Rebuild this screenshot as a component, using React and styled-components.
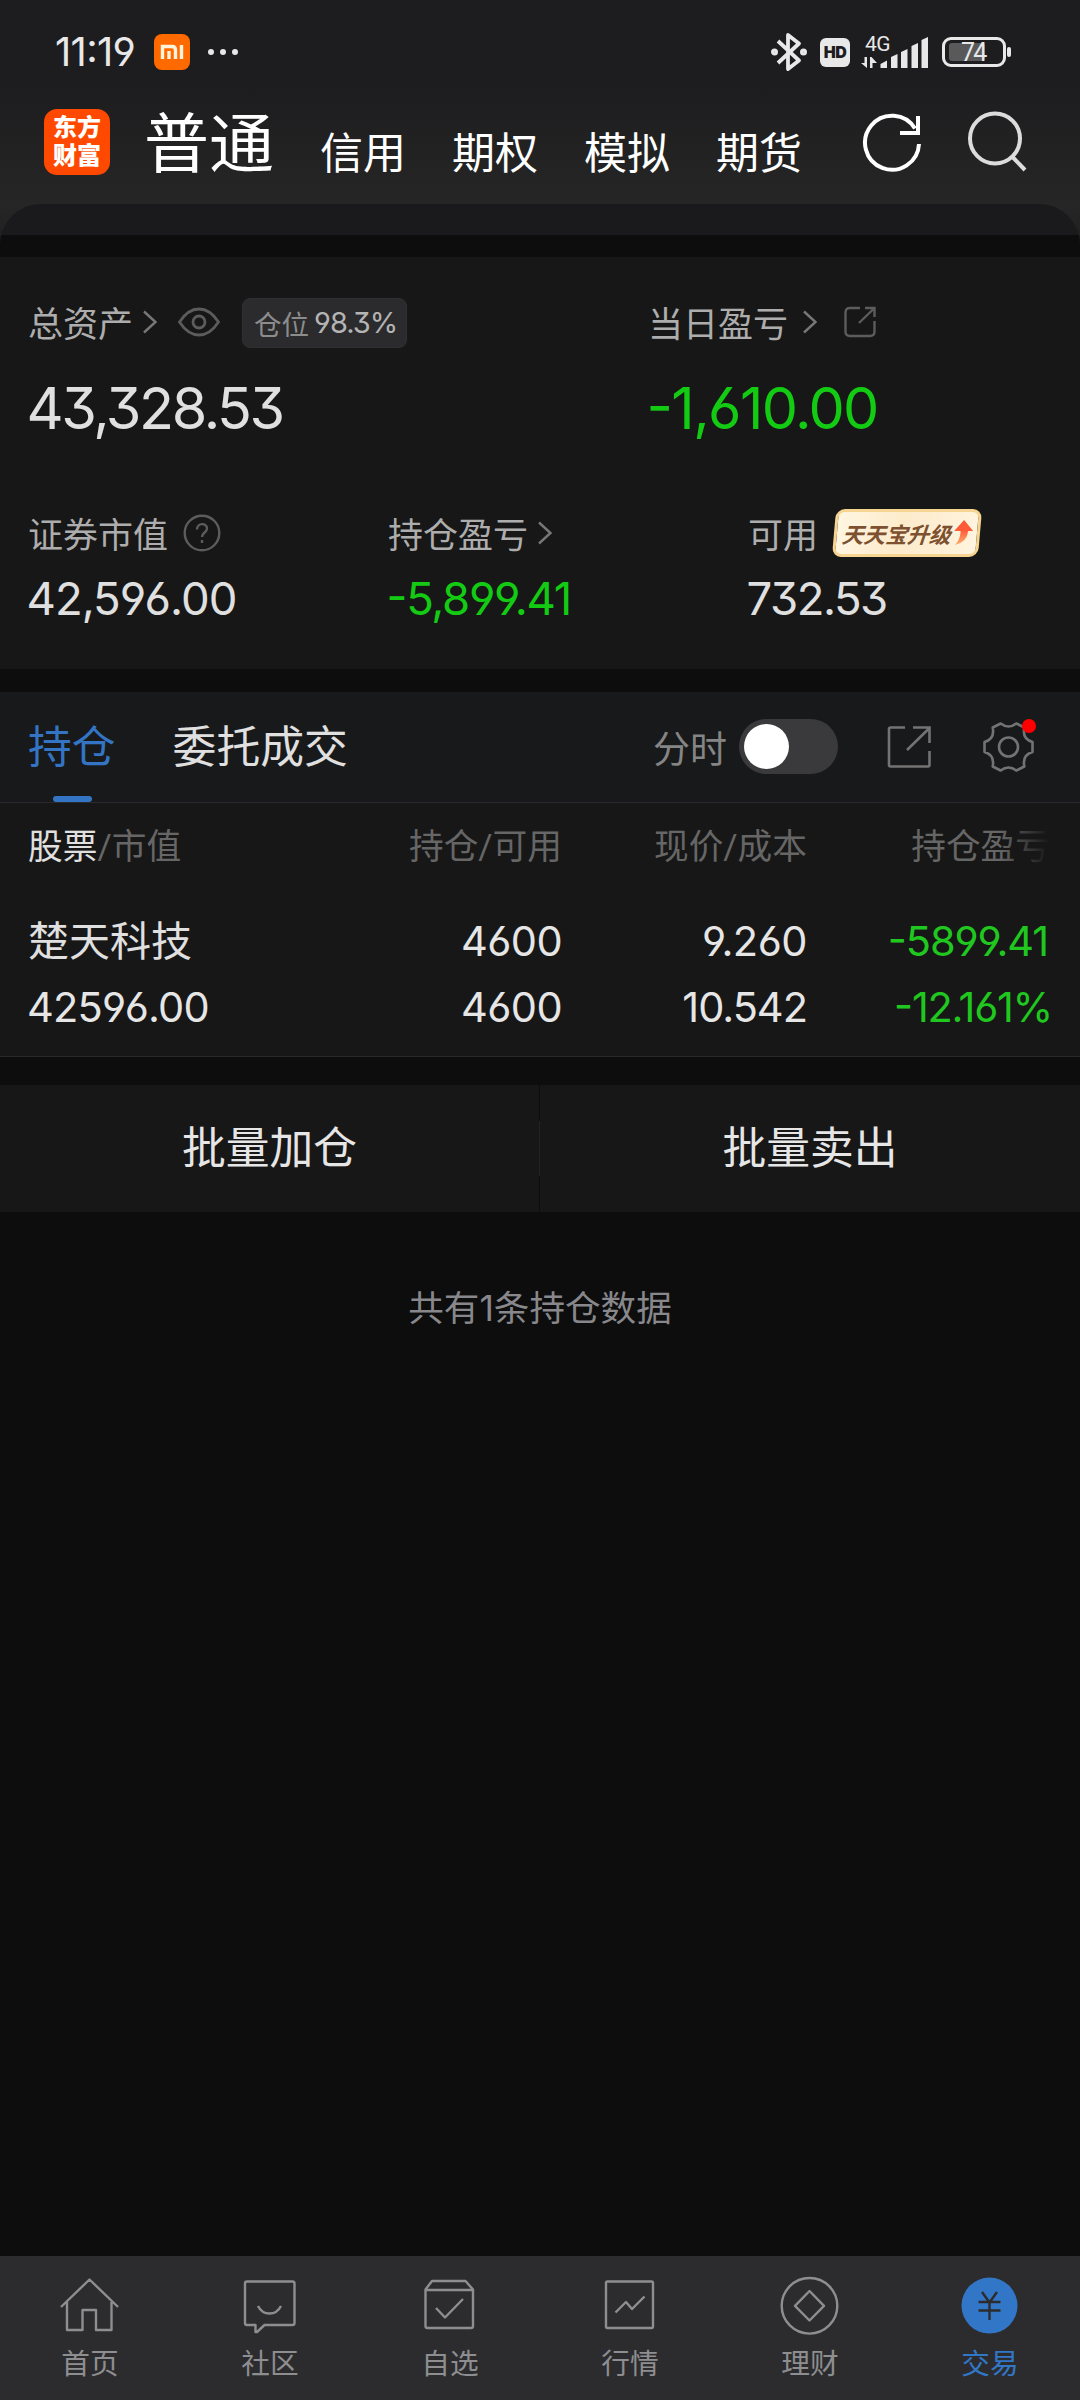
import React, {useState} from "react";
import styled, {createGlobalStyle} from "styled-components";

const GlobalStyles = createGlobalStyle`
    * {
        box-sizing: border-box;
    }

    body {
        margin: 0;
        background: #0d0d0d;
        color: #e0e0e0;
        font-family: Roboto, "Noto Sans CJK SC", sans-serif;
    }

    svg {
        display: block;
        flex: none;
    }
`

const Page = styled.div`
    width: 1080px;
    height: 2400px;
    display: flex;
    flex-direction: column;
    overflow: hidden;
    background: #0d0d0d;
    white-space: nowrap;
`

// figures use the flat 3, the straight 6 and 9 and the raised minus
const Figures = styled.div`
    font-family: Inter, "Noto Sans CJK SC", sans-serif;
    font-feature-settings: "cv03", "cv04", "cv09", "case";
`

const Top = styled.div`
    background: linear-gradient(#1d1d1f 0px, #1d1d1f 85px, #262626 204px);
`

const StatusBar = styled.div`
    height: 104px;
    padding: 0 74px 0 55px;
    display: flex;
    align-items: center;
    color: #e8e8e8;
`

const Clock = styled(Figures)`
    width: 99px;
    font-size: 40px;
    line-height: 46px;
    letter-spacing: -0.7px;
`

const StatusDots = styled.div`
    display: flex;
    gap: 6px;
    margin-left: 18px;

    i {
        width: 6px;
        height: 6px;
        border-radius: 3px;
        background: #e8e8e8;
    }
`

const StatusRight = styled.div`
    margin-left: auto;
    display: flex;
    align-items: center;
`

const HdBadge = styled.div`
    width: 30px;
    height: 29px;
    margin: 0 11px 0 13px;
    border-radius: 6px;
    background: #e8e8e8;
    color: #1d1d1f;
    font: 900 16px/29px Inter, sans-serif;
    letter-spacing: -0.5px;
    text-align: center;
`

const Signal = styled.div`
    position: relative;
    width: 68px;
    height: 34px;
    margin-right: 13px;
`

const Network = styled.span`
    position: absolute;
    left: 4px;
    top: -2px;
    font-size: 21px;
    line-height: 22px;
    letter-spacing: -0.5px;
`

const Battery = styled.div`
    position: relative;
    width: 64px;
    height: 30px;
    padding: 3px 4px;
    border: 3px solid #e8e8e8;
    border-radius: 9px;

    &:after {
        content: '';
        position: absolute;
        right: -8px;
        top: 7px;
        width: 4px;
        height: 10px;
        border-radius: 2px;
        background: #e8e8e8;
    }
`

const BatteryLevel = styled.div`
    width: 36px;
    height: 18px;
    border-radius: 3px;
    background: #59595a;
`

const BatteryText = styled.span`
    position: absolute;
    left: 16px;
    top: 1px;
    font-size: 25px;
    line-height: 23px;
    letter-spacing: -1.8px;
`

const Header = styled.div`
    height: 100px;
    padding: 0 52px 0 44px;
    display: flex;
    align-items: flex-start;
    color: #fff;
`

const Logo = styled.div`
    width: 66px;
    height: 66px;
    margin-top: 5px;
    padding-top: 5px;
    border-radius: 13px;
    background: #ff4800;
    font: 900 24px/28px Roboto, "Noto Sans CJK SC", sans-serif;
    text-align: center;
`

const Account = styled.div`
    width: 132px;
    margin: ${props => props.active ? '3px 0 0 34px' : '22px 0 0 0'};
    font-size: ${props => props.active ? '65px' : '43px'};
    line-height: ${props => props.active ? '76px' : '56px'};
`

const Accounts = styled.div`
    display: flex;
    margin-left: 44px;
`

const HeaderIcons = styled.div`
    display: flex;
    gap: 43px;
    margin: 4px 0 0 auto;
`

const Sheet = styled.div`
    height: 53px;
    padding-top: 31px;
    border-radius: 41px 41px 0 0;
    overflow: hidden;
    background: #1a1a1c;

    &:after {
        content: '';
        display: block;
        height: 22px;
        background: #0d0d0d;
    }
`

const SheetBack = styled.div`
    background: linear-gradient(#262626, #1d1d1d);
`

const Assets = styled.div`
    height: 412px;
    padding: 37px 0 0 28px;
    background: #171717;
`

const AssetsTop = styled.div`
    display: grid;
    grid-template-columns: 620px 1fr;
    height: 211px;
`

const AssetsBottom = styled.div`
    display: grid;
    grid-template-columns: 360px 360px 1fr;
`

const Label = styled.div`
    height: ${props => props.tall ? '56px' : '54px'};
    padding-bottom: ${props => props.tall ? '2px' : '0'};
    display: flex;
    align-items: center;
    font-size: 35px;
    color: #adadad;

    > svg {
        margin-top: 2px;
    }
`

const Value = styled(Figures)`
    margin: ${props => props.big ? '27px' : '12px'} 0 0 -1.5px;
    font-size: ${props => props.big ? '57.5px' : '45.5px'};
    line-height: ${props => props.big ? '62px' : '56px'};
    letter-spacing: ${props => props.track};
    color: ${props => props.green ? '#14cb14' : '#e0e0e0'};
`

const Position = styled(Figures)`
    width: 165px;
    height: 50px;
    margin: 3px 0 0 22px;
    padding-left: 11px;
    display: flex;
    align-items: center;
    gap: 5px;
    border: 1px solid #2f2f31;
    border-radius: 8px;
    background: #2b2b2d;
    font-size: 27.5px;
    color: #8c8c8c;

    b {
        font-size: 29px;
        font-weight: 400;
        letter-spacing: -1px;
        color: #b4b4b4;
    }
`

const Promo = styled.div`
    width: 146px;
    height: 48px;
    margin: 1px 0 0 16px;
    padding-left: 5px;
    display: flex;
    align-items: center;
    gap: 3px;
    border: 3px solid #f6d491;
    border-radius: 9px;
    background: linear-gradient(100deg, #fff6e2, #fdebcb 45%, #fff4df);
    transform: skewX(-5deg);
    font-size: 21.8px;
    font-weight: 700;
    font-style: italic;
    color: #7d5030;
`

const Tabs = styled.div`
    height: 111px;
    margin-top: 23px;
    padding: 0 46px 0 28px;
    display: flex;
    align-items: center;
    border-bottom: 1px solid #2a2a2c;
    background: #18191b;
`

const Tab = styled.div`
    position: relative;
    height: 110px;
    margin-right: 57px;
    font-size: 43.8px;
    line-height: 112px;
    color: ${props => props.active ? '#3375c4' : '#e0e0e0'};

    ${props => props.active && `
        &:after {
            content: '';
            position: absolute;
            left: 25px;
            bottom: 0;
            width: 39px;
            height: 6px;
            border-radius: 3px;
            background: #3375c4;
        }
    `}
`

const TabTools = styled.div`
    margin: -1px 0 0 auto;
    display: flex;
    align-items: center;
    font-size: 37px;
    color: #858585;
`

const Switch = styled.button`
    width: 99px;
    height: 55px;
    margin: 0 49px 0 12px;
    padding: 0 5px;
    display: flex;
    align-items: center;
    justify-content: ${props => props.$on ? 'flex-end' : 'flex-start'};
    border: 0;
    border-radius: 28px;
    background: #3a3a3c;

    &:after {
        content: '';
        width: 45px;
        height: 45px;
        border-radius: 50%;
        background: #fff;
    }
`

const Settings = styled.div`
    position: relative;
    margin-left: 52px;

    &:after {
        content: '';
        position: absolute;
        right: -2px;
        top: -3px;
        width: 14px;
        height: 14px;
        border-radius: 7px;
        background: #f00;
    }
`

const Table = styled.div`
    position: relative;
    height: 254px;
    border-bottom: 1px solid #29292b;
    background: #171717;
`

const Row = styled.div`
    display: grid;
    grid-template-columns: 289px 245px 245px 245px;
    padding-left: 28px;
    text-align: right;

    > :first-child {
        text-align: left;
    }
`

const HeadRow = styled(Row)`
    padding-top: 19px;
    font-size: 34.7px;
    line-height: 50px;
    color: #666;

    > :last-child {
        margin-right: 2px;
    }

    em {
        font-style: normal;
        color: #e0e0e0;
    }
`

const FirstRow = styled(Row)`
    padding-top: 36px;
    font-size: 41.5px;
    line-height: 66px;
`

const SecondRow = styled(FirstRow)`
    padding-top: 0;
`

const StockName = styled.span`
    margin: 1px 0 -1px;
    font-size: 41px;
`

const Cell = styled(Figures)`
    margin: 0 ${props => props.inset || '0'} 0 -1px;
    letter-spacing: ${props => props.track || '-0.6px'};
    color: ${props => props.green ? '#1fc71f' : '#e6e6e6'};
`

const HeadFade = styled.div`
    position: absolute;
    right: 0;
    top: 0;
    width: 80px;
    height: 88px;
    background: linear-gradient(90deg, rgba(23, 23, 23, 0), #171717 62%);
`

const Actions = styled.div`
    height: 127px;
    margin-top: 28px;
    display: grid;
    grid-template-columns: 539px 1px 540px;
    align-items: center;
`

const Action = styled.div`
    font-size: 43.8px;
    line-height: 129px;
    height: 127px;
    text-align: center;
    background: #171717;
    color: #e6e6e6;
`

const Divider = styled.div`
    height: 55px;
    background: #232323;
`

const Summary = styled(Figures)`
    flex: 1;
    padding-top: 70px;
    font-size: 35.6px;
    line-height: 54px;
    text-align: center;
    color: #88888c;
`

const NavBar = styled.div`
    height: 144px;
    padding-top: 18px;
    display: flex;
    background: #2c2c2e;
`

const NavItem = styled.div`
    width: 180px;
    display: flex;
    flex-direction: column;
    align-items: center;
    font-size: 28.7px;
    line-height: 53px;
    color: ${props => props.active ? '#3277c7' : '#8e8e90'};

    svg {
        fill: none;
        stroke: currentColor;
        stroke-width: 2.4;
        stroke-linejoin: round;
    }
`

const Chevron = ({gap}) => (
    <svg width={14 + gap} height="24" viewBox={`${-gap} 0 ${14 + gap} 24`} fill="none" stroke="#777" strokeWidth="2.4">
        <path d="M1 1.5L12.5 12L1 22.5" />
    </svg>
);

const navItems = [
    {
        label: '首页',
        icon: <path d="M3 33L31.500 5.500L60 33M9 28V56H24.500V36H38V56H53.500V28" />
    },
    {
        label: '社区',
        icon: <path d="M9 7.5H54.5Q56.5 7.5 56.5 9.5V49Q56.5 51 54.5 51H26.5L19 58H17.5V51H9Q7 51 7 49V9.5Q7 7.5 9 7.5ZM20 32C25 42 38 42 43 32" />
    },
    {
        label: '自选',
        icon: <path d="M7.500 15.500L14 7H47.500L55 15.500V52Q55 54 53 54H9.500Q7.500 54 7.500 52ZM7.500 16H55M18 34L27 43.500L45 25" />
    },
    {
        label: '行情',
        icon: <path d="M9.500 7.500H53.500Q55 7.500 55 9V52.500Q55 54 53.500 54H9.500Q8 54 8 52.500V9Q8 7.500 9.500 7.500ZM17.500 38.500L28 28L34 35L46.500 22.500" />
    },
    {
        label: '理财',
        icon: <>
            <circle cx="31.500" cy="31.800" r="27.800" />
            <path d="M31.500 17L46 31.800L31.500 46.500L17 31.800Z" />
        </>
    },
    {
        label: '交易',
        active: true,
        icon: <>
            <circle cx="31.500" cy="31.600" r="28" fill="#3277c7" stroke="none" />
            <path d="M24 18L31.500 28.500L39 18M31.500 28V46M20.500 28H42.500M20.500 36.500H42.500" stroke="#2c2c2e" />
        </>
    }
];

const App = () => {
    const [timeSharing, setTimeSharing] = useState(false);

    return (
        <Page>
            <GlobalStyles />
            <Top>
                <StatusBar>
                    <Clock>11:19</Clock>
                    <svg width="36" height="36" viewBox="0 0 36 36">
                        <rect width="36" height="36" rx="8" fill="#ff6a00" />
                        <path d="M8.500 25V12.500H18Q21.500 12.500 21.500 16V25M15 17V25M27.500 11V25" fill="none" stroke="#fff3dc" strokeWidth="3.400" />
                    </svg>
                    <StatusDots><i /><i /><i /></StatusDots>
                    <StatusRight>
                        <svg width="36" height="40" viewBox="0 0 36 40" fill="none" stroke="#e8e8e8" strokeWidth="3.800" strokeLinejoin="round">
                            <path d="M7 9L28 28.500L17 37V3L28 11.500L7 31" />
                            <circle cx="3.500" cy="20" r="1.600" />
                            <circle cx="32.500" cy="20" r="1.600" />
                        </svg>
                        <HdBadge>HD</HdBadge>
                        <Signal>
                            <Network>4G</Network>
                            <svg width="68" height="34" viewBox="0 0 68 34" fill="#e8e8e8">
                                <path d="M0 28L6 33V22H3.500V28ZM9 22V33H11.500V28H16L10.500 22Z" />
                                <path d="M19.500 33V29L26 25.500V33ZM30 33V22L36.500 19V33ZM40 33V17L46.500 14V33ZM50.500 33V11L57 8V33ZM60.500 33V5L67 2V33Z" />
                            </svg>
                        </Signal>
                        <Battery>
                            <BatteryLevel />
                            <BatteryText>74</BatteryText>
                        </Battery>
                    </StatusRight>
                </StatusBar>
                <Header>
                    <Logo>东方<br />财富</Logo>
                    <Account active>普通</Account>
                    <Accounts>
                        {['信用', '期权', '模拟', '期货'].map(name => <Account key={name}>{name}</Account>)}
                    </Accounts>
                    <HeaderIcons>
                        <svg width="62" height="70" viewBox="0 0 62 70" fill="none" stroke="#fff" strokeWidth="4">
                            <path d="M58 36A27 27 0 1 1 54 20.500M57 8V25H39" />
                        </svg>
                        <svg width="62" height="70" viewBox="0 0 62 70" fill="none" stroke="#dcdcdc" strokeWidth="4">
                            <circle cx="29" cy="30.500" r="25" />
                            <path d="M46 48.500L59 62" />
                        </svg>
                    </HeaderIcons>
                </Header>
            </Top>
            <SheetBack><Sheet /></SheetBack>

            <Assets>
                <AssetsTop>
                    <div>
                        <Label tall>
                            总资产
                            <Chevron gap={10} />
                            <svg width="63" height="30" viewBox="-21 0 63 30" fill="none" stroke="#5c5c5c" strokeWidth="2.800">
                                <path d="M1.500 15Q10 2 21 2T40.500 15Q32 28 21 28T1.500 15Z" />
                                <circle cx="21" cy="15" r="6" />
                            </svg>
                            <Position>仓位<b>98.3%</b></Position>
                        </Label>
                        <Value big track="-2.4px">43,328.53</Value>
                    </div>
                    <div>
                        <Label tall>
                            当日盈亏
                            <Chevron gap={15} />
                            <svg width="60" height="32" viewBox="-27 0 60 32" fill="none" stroke="#5c5c5c" strokeWidth="2.400">
                                <path d="M16 2H6Q1.500 2 1.500 6.500V25.500Q1.500 30 6 30H26Q30.500 30 30.500 25.500V15M15 17L30 2.500M21 2H30.500V11" />
                            </svg>
                        </Label>
                        <Value big green track="-1.6px">-1,610.00</Value>
                    </div>
                </AssetsTop>
                <AssetsBottom>
                    <div>
                        <Label>
                            证券市值
                            <svg width="53" height="38" viewBox="-15 0 53 38" fill="none" stroke="#5c5c5c" strokeWidth="2.400">
                                <circle cx="19" cy="19" r="17.300" />
                                <path d="M14 15.500C14 8.500 24 8.500 24 14.500C24 18.500 19 18.500 19 23M19 26V29" />
                            </svg>
                        </Label>
                        <Value track="-1px">42,596.00</Value>
                    </div>
                    <div>
                        <Label>持仓盈亏<Chevron gap={10} /></Label>
                        <Value green track="-1.3px">-5,899.41</Value>
                    </div>
                    <div>
                        <Label>
                            可用
                            <Promo>
                                天天宝升级
                                <svg width="20" height="26" viewBox="0 0 20 26">
                                    <defs>
                                        <linearGradient id="rise" x1="0" y1="0" x2="0" y2="1">
                                            <stop offset="0.4" stopColor="#ff5a38" />
                                            <stop offset="1" stopColor="#ffb070" />
                                        </linearGradient>
                                    </defs>
                                    <path d="M9 0L19 11H14Q14 22 2 25Q7 19 6.500 11H0Z" fill="url(#rise)" />
                                </svg>
                            </Promo>
                        </Label>
                        <Value track="-1.5px">732.53</Value>
                    </div>
                </AssetsBottom>
            </Assets>

            <Tabs>
                <Tab active>持仓</Tab>
                <Tab>委托成交</Tab>
                <TabTools>
                    分时
                    <Switch $on={timeSharing} onClick={() => setTimeSharing(!timeSharing)} />
                    <svg width="44" height="42" viewBox="0 0 44 42" fill="none" stroke="#737373" strokeWidth="2.600">
                        <path d="M18 1.500H3.500Q2 1.500 2 3V39Q2 40.500 3.500 40.500H41Q42.500 40.500 42.500 39V25M20 24L42 2.500M26 1.500H42.500V17" />
                    </svg>
                    <Settings>
                        <svg width="51" height="50" viewBox="0 0 51 50" fill="none" stroke="#737373" strokeWidth="2.600" strokeLinejoin="round">
                            <path d="M17.700 1.500Q25.500 7.500 33.300 1.500L41.300 5.500Q39 17 49.500 20V30Q39 33 41.300 44.500L33.300 48.500Q25.500 42.500 17.700 48.500L9.700 44.500Q12 33 1.500 30V20Q12 17 9.700 5.500Z" />
                            <circle cx="25.500" cy="25" r="9.500" />
                        </svg>
                    </Settings>
                </TabTools>
            </Tabs>

            <Table>
                <HeadRow>
                    <span><em>股票</em>/市值</span>
                    <span>持仓/可用</span>
                    <span>现价/成本</span>
                    <span>持仓盈亏</span>
                </HeadRow>
                <FirstRow>
                    <StockName>楚天科技</StockName>
                    <Cell>4600</Cell>
                    <Cell track="-0.5px">9.260</Cell>
                    <Cell green track="-1.1px" inset="4px">-5899.41</Cell>
                </FirstRow>
                <SecondRow>
                    <Cell track="-0.8px">42596.00</Cell>
                    <Cell>4600</Cell>
                    <Cell track="-1px">10.542</Cell>
                    <Cell green track="-1.3px">-12.161%</Cell>
                </SecondRow>
                <HeadFade />
            </Table>

            <Actions>
                <Action>批量加仓</Action>
                <Divider />
                <Action>批量卖出</Action>
            </Actions>
            <Summary>共有1条持仓数据</Summary>

            <NavBar>
                {navItems.map(item => (
                    <NavItem key={item.label} active={item.active}>
                        <svg width="64" height="64" viewBox="0 0 64 64">{item.icon}</svg>
                        {item.label}
                    </NavItem>
                ))}
            </NavBar>
        </Page>
    );
}

export default App;
